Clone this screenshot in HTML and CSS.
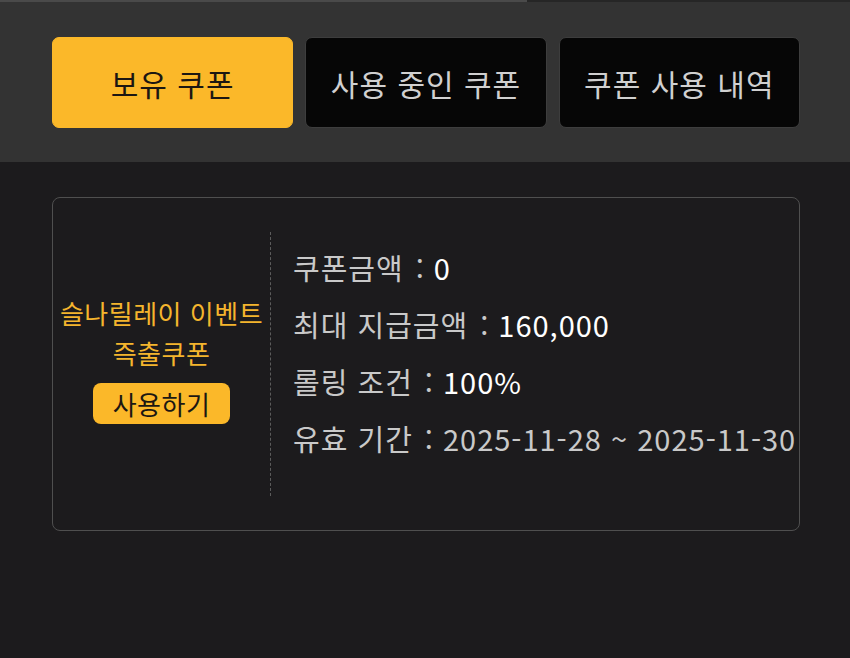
FILE: index.html
```html
<!DOCTYPE html>
<html lang="ko">
<head>
<meta charset="utf-8">
<title>쿠폰</title>
<link rel="stylesheet" href="styles.css">
</head>
<body>
<div class="topline"><span class="topline-left"></span><span class="topline-right"></span></div>
<header class="header">
  <nav class="tabs">
    <button class="tab tab-active">보유 쿠폰</button>
    <button class="tab">사용 중인 쿠폰</button>
    <button class="tab">쿠폰 사용 내역</button>
  </nav>
</header>
<main class="content">
  <section class="coupon">
    <div class="coupon-left">
      <div class="coupon-title">슬나릴레이 이벤트<br>즉출쿠폰</div>
      <button class="use-btn">사용하기</button>
    </div>
    <div class="coupon-right">
      <div class="info">
        <div class="row"><span class="label">쿠폰금액</span><span class="colon">:</span><span class="value">0</span></div>
        <div class="row"><span class="label">최대 지급금액</span><span class="colon">:</span><span class="value">160,000</span></div>
        <div class="row"><span class="label">롤링 조건</span><span class="colon">:</span><span class="value">100%</span></div>
        <div class="row"><span class="label">유효 기간</span><span class="colon">:</span><span class="label">2025-11-28 ~ 2025-11-30</span></div>
      </div>
    </div>
  </section>
</main>
</body>
</html>
```

FILE: styles.css
```css
* { box-sizing: border-box; }
html, body {
  margin: 0;
  padding: 0;
  background: #1c1b1d;
  font-family: "Noto Sans CJK KR", "Noto Sans", sans-serif;
  height: 100%;
}
.topline {
  display: flex;
  height: 2px;
}
.topline-left { width: 527px; background: #4a4a4a; }
.topline-right { flex: 1; background: #262626; }

.header {
  background: #333333;
  padding: 35px 50px 34px 52px;
}
.tabs {
  display: grid;
  grid-template-columns: 1fr 1fr 1fr;
  gap: 12px;
  width: 748px;
}
.tab {
  height: 91px;
  border: 1px solid #3d3d3d;
  border-radius: 7px;
  background: #060606;
  color: #d0d0d0;
  font-family: inherit;
  font-size: 30px;
  letter-spacing: 1px;
  padding: 0;
  cursor: pointer;
}
.tab-active {
  background: #fbb829;
  border-color: #fbb829;
  color: #1c1712;
}

.content {
  padding: 35px 50px 0 52px;
}
.coupon {
  display: flex;
  width: 748px;
  height: 334px;
  border: 1px solid #4f4f4f;
  border-radius: 8px;
}
.coupon-left {
  width: 217px;
  display: flex;
  flex-direction: column;
  align-items: center;
  justify-content: center;
  padding-bottom: 11px;
}
.coupon-title {
  color: #f4b52d;
  font-size: 26px;
  letter-spacing: 0.5px;
  line-height: 40px;
  text-align: center;
  white-space: nowrap;
}
.use-btn {
  margin-top: 10px;
  height: 41px;
  padding: 0 20px;
  border: none;
  border-radius: 8px;
  background: #fbb829;
  color: #1c1712;
  font-family: inherit;
  font-size: 26px;
  letter-spacing: 0.5px;
  line-height: 41px;
}
.coupon-right {
  flex: 1;
  margin: 34px 0;
  border-left: 1px dashed #5c5c5c;
  padding: 7px 0 0 22px;
}
.row {
  font-size: 29px;
  letter-spacing: 1px;
  line-height: 57px;
  white-space: nowrap;
}
.label { color: #c9c9c9; }
.value { color: #ffffff; }
.colon {
  color: #c9c9c9;
  margin: 0 9px 0 12px;
}
```
